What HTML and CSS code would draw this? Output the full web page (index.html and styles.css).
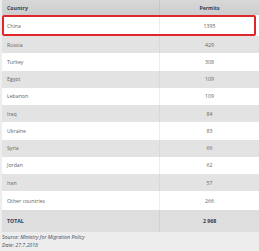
FILE: index.html
```html
<!DOCTYPE html>
<html>
<head>
<meta charset="utf-8">
<link rel="stylesheet" href="styles.css">
</head>
<body>
<div class="page">
  <div class="table">
    <div class="row head"><div class="c1">Country</div><div class="c2">Permits</div></div>
    <div class="row first"><div class="c1">China</div><div class="c2">1395</div></div>
    <div class="row alt"><div class="c1">Russia</div><div class="c2">429</div></div>
    <div class="row"><div class="c1">Turkey</div><div class="c2">308</div></div>
    <div class="row alt"><div class="c1">Egypt</div><div class="c2">109</div></div>
    <div class="row"><div class="c1">Lebanon</div><div class="c2">109</div></div>
    <div class="row alt"><div class="c1">Iraq</div><div class="c2">84</div></div>
    <div class="row"><div class="c1">Ukraine</div><div class="c2">83</div></div>
    <div class="row alt"><div class="c1">Syria</div><div class="c2">66</div></div>
    <div class="row"><div class="c1">Jordan</div><div class="c2">62</div></div>
    <div class="row alt"><div class="c1">Iran</div><div class="c2">57</div></div>
    <div class="row other"><div class="c1">Other countries</div><div class="c2">266</div></div>
    <div class="row total"><div class="c1">TOTAL</div><div class="c2">2 968</div></div>
    <div class="highlight"></div>
  </div>
  <div class="note">
    <div>Source: Ministry for Migration Policy</div>
    <div>Date: 27.7.2018</div>
  </div>
</div>
</body>
</html>
```
FILE: styles.css
```css
html, body {
  margin: 0;
  padding: 0;
  background: #ededed;
}
.page {
  width: 259px;
  height: 251px;
  font-family: "Open Sans", "Liberation Sans", sans-serif;
  font-size: 5.2px;
  color: #636363;
}
.table {
  position: relative;
  margin-left: 2px;
  background: #fff;
}
.row {
  display: grid;
  grid-template-columns: 158px 1fr;
  height: 17.25px;
  align-items: center;
  background: #fff;
}
.row.alt { background: #e3e3e3; }
.row .c1 {
  padding-left: 5px;
  height: 100%;
  display: flex;
  align-items: center;
  border-right: 1px solid #ececec;
}
.row.alt .c1 { border-right-color: #d8d8d8; }
.row .c2 {
  text-align: center;
}
.row.head {
  height: 15px;
  background: linear-gradient(#d8d8d8, #cdcdcd);
  font-weight: bold;
  color: #3a3f4a;
}
.row.head .c1 { border-right-color: #c6c6c6; }
.row.first { height: 21px; }
.row.other { height: 19px; }
.row.total {
  height: 22px;
  background: #dedede;
  font-weight: bold;
  color: #2f3a52;
}
.row.total .c1 { border-right-color: #d2d2d2; }
.highlight {
  position: absolute;
  left: 0;
  top: 15px;
  width: 254px;
  height: 21px;
  box-sizing: border-box;
  border: 2px solid #e0262a;
  border-radius: 2px;
}
.note {
  padding: 1px 0 0 2px;
  font-style: italic;
  color: #3e4a63;
  line-height: 8px;
}
```
